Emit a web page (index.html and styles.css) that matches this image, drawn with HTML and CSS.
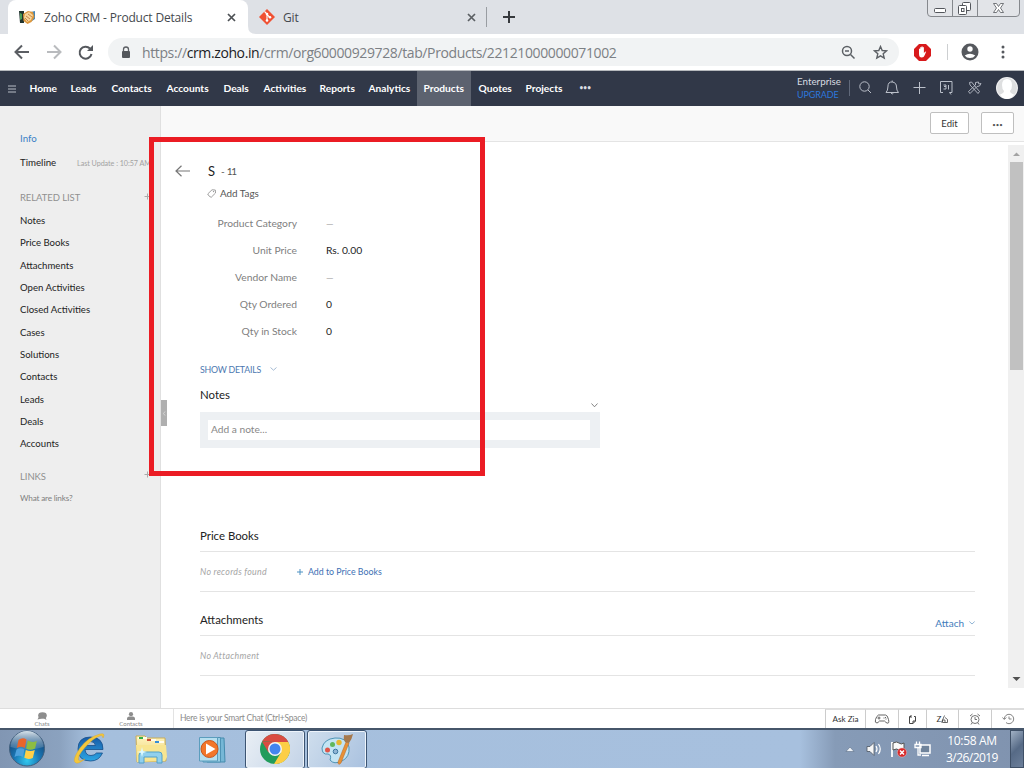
FILE: index.html
```html
<!DOCTYPE html>
<html lang="en">
<head>
<meta charset="utf-8">
<title>Zoho CRM - Product Details</title>
<link rel="stylesheet" href="styles.css">
</head>
<body>
<div class="screen">
  <header class="tabstrip">
    <div class="tab tab-active">
      <svg class="favicon" width="17" height="16" viewBox="0 0 17 16"><path d="M0 2h5v12H1z" fill="#20352f"/><path d="M1 4l2 1v5l-2 1z" fill="#4b9f59"/><path d="M12 3l4-1v8l-3 2z" fill="#4386b8"/><path d="M4 5l5-3 5 1 1.500 5-3 5-4 2-4-3z" fill="#dc963c"/><path d="M6 5l4-2 4 3-2 5-4 2-3-4z" fill="#f7d69c"/><path d="M7 7l4 3M9 5l4 3M6 9l3 3" stroke="#b5713a" stroke-width=".8" fill="none"/></svg>
      <span class="tab-title">Zoho CRM - Product Details</span>
      <svg class="tab-x" width="9" height="9" viewBox="0 0 9 9"><path d="M1 1l7 7M8 1l-7 7" stroke="#4c5054" stroke-width="1.700"/></svg>
      <svg class="flare" width="8" height="8" viewBox="0 0 8 8"><path d="M0 0q0 8 8 8H0z" fill="#fff"/></svg>
    </div>
    <div class="tab">
      <svg class="favicon" width="17" height="16" viewBox="0 0 17 16"><path d="M8 0L16 8l-8 8-8-8z" fill="#f05133"/><path d="M5.500 2.500L8 5v7M8 5.500l3 3" stroke="#fff" stroke-width="1.100" fill="none"/><circle cx="8" cy="5" r="1.300" fill="#fff"/><circle cx="8" cy="11.500" r="1.300" fill="#fff"/><circle cx="11" cy="8.300" r="1.300" fill="#fff"/></svg>
      <span class="tab-title git">Git</span>
      <svg class="tab-x" width="9" height="9" viewBox="0 0 9 9"><path d="M1 1l7 7M8 1l-7 7" stroke="#5b5f63" stroke-width="1.700"/></svg>
    </div>
    <i class="tab-sep"></i>
    <svg class="new-tab" width="12" height="12" viewBox="0 0 12 12"><path d="M6 0v12M0 6h12" stroke="#36393d" stroke-width="2"/></svg>
    <svg class="win-buttons" width="94" height="18" viewBox="0 0 94 18"><path d="M.5 0v13q0 3.500 3.500 3.500h85q3.500 0 3.500-3.500V0" fill="#e2e4e8" stroke="#85888d"/><path d="M25.500 0v16M50.500 0v16" stroke="#85888d"/><g fill="#fff" stroke="#53565c"><rect x="7.500" y="8.500" width="11" height="4" rx="1"/><rect x="35.500" y="2.500" width="8" height="8" rx="1"/><rect x="31.500" y="5.500" width="8" height="9" rx="1"/><rect x="34.500" y="8.500" width="2.500" height="3"/><path d="M66.500 3.500h3l2 3 2-3h3l-3 4.500 3 4.500h-3l-2-3-2 3h-3l3-4.500z" stroke-width=".8"/></g></svg>
  </header>

  <div class="toolbar">
    <svg class="nav-btns" width="80" height="18" viewBox="0 0 80 18"><g fill="none" stroke-width="2"><path d="M15 9H2M8 2.500L1.500 9 8 15.500" stroke="#5b5e63"/><path d="M33 9h13M40 2.500L46.500 9 40 15.500" stroke="#b9bbbe"/><path d="M76 5.500A6 6 0 1 0 77.500 11" stroke="#55585d"/></g><path d="M79 2v6h-6z" fill="#55585d"/></svg>
    <div class="omnibox">
      <svg width="10" height="13" viewBox="0 0 10 13"><path d="M2.500 6V3.500a2.500 2.500 0 0 1 5 0V6" fill="none" stroke="#5c5f64" stroke-width="1.300"/><rect x="1" y="5" width="8" height="7" rx="1" fill="#54575c"/></svg>
      <span class="url">https://<b>crm.zoho.in</b>/crm/org60000929728/tab/Products/22121000000071002</span>
      <svg width="15" height="15" viewBox="0 0 15 15"><g fill="none" stroke="#5c6065" stroke-width="1.500"><circle cx="6" cy="6" r="4.500"/><path d="M9.500 9.500l4 4M4 6h4"/></g></svg>
      <svg width="15" height="15" viewBox="0 0 15 15"><path d="M7.500 1.500l1.700 4 4.300.4-3.300 2.900 1 4.300-3.700-2.300-3.700 2.300 1-4.300L1.500 5.900l4.300-.4z" fill="none" stroke="#5c6065" stroke-width="1.400"/></svg>
    </div>
    <svg class="ext" width="17" height="17" viewBox="0 0 17 17"><path d="M5 0h7l5 5v7l-5 5H5l-5-5V5z" fill="#d81a1c"/><path d="M5 8V5q.7-1 1.200 0v2.500V3.500q.6-1 1.200 0V7 2.700q.7-1 1.300 0V7 3.400q.6-.8 1.200 0V9q1.200-2 2.300-1.500L10.800 11q-1 2.500-3 2.500Q5 13.500 5 10z" fill="#fff"/></svg>
    <i class="tool-sep"></i>
    <svg class="profile" width="18" height="18" viewBox="0 0 18 18"><circle cx="9" cy="9" r="8.500" fill="#56595e"/><circle cx="9" cy="6" r="2.700" fill="#fff"/><path d="M3.700 12.500q5.300-3.700 10.600 0Q12.500 15 9 15t-5.300-2.500" fill="#fff"/></svg>
    <svg class="kebab" width="4" height="14" viewBox="0 0 4 14"><g fill="#56595e"><circle cx="2" cy="2" r="1.500"/><circle cx="2" cy="7" r="1.500"/><circle cx="2" cy="12" r="1.500"/></g></svg>
  </div>

  <nav class="crmnav">
    <svg class="burger" width="8" height="8" viewBox="0 0 8 8"><path d="M0 1h8M0 4h8M0 7h8" stroke="#b9bdc6"/></svg>
    <div class="modules">
      <a>Home</a><a>Leads</a><a>Contacts</a><a>Accounts</a><a>Deals</a><a>Activities</a><a>Reports</a><a>Analytics</a><a class="current">Products</a><a class="quotes">Quotes</a><a>Projects</a><a class="more">•••</a>
    </div>
    <div class="plan"><span>Enterprise</span><span class="upgrade">UPGRADE</span></div>
    <svg class="nav-icons" width="136" height="20" viewBox="0 0 136 20"><g fill="none" stroke="#bbc0ca"><path d="M.5 2v16" stroke="#61697a"/><circle cx="15.500" cy="8.500" r="4.700"/><path d="M19 12l3 3M37 14.500h12.500q-2-2-2-5.500 0-4.500-4.300-5t-4.300 5q0 3.500-1.900 5.500M42 15q1.200 2 2.500 0M43.200 4V2.500M70.500 4v12M64.500 9.500h12"/><path d="M94 14.500h-2.500v-11H103v11h-2.500l1.500 2M94.500 7h2.500v1.500h-2M97 8.500V11h-2.500M99.500 7v4.500"/><path d="M120.500 4.500l2-.5 8 9.500-1.500 2-8-8.500zM129.500 4l-3 .5v2.500l-7 6.500 1.500 2 7-7 2.500-.5 1.500-2.500-2.200.5z" stroke-width=".9"/></g></svg>
    <svg class="avatar" width="22" height="22" viewBox="0 0 22 22"><circle cx="11" cy="11" r="11" fill="#f1f1f2"/><circle cx="11" cy="11" r="10" fill="#dedfe0"/><path d="M11 2q5 0 5 6 0 4-2 6 0 2 4 3.500Q15 22 11 22t-7-4.500Q8 16 8 14 6 12 6 8q0-6 5-6" fill="#fff"/></svg>
  </nav>

  <div class="page">
    <aside class="sidebar">
      <a class="info">Info</a>
      <div class="timeline"><a>Timeline</a><small>Last Update : 10:57 AM</small></div>
      <div class="side-head"><span>RELATED LIST</span><svg width="7" height="7"><path d="M3.500 .5v6M.5 3.500h6" stroke="#aaa"/></svg></div>
      <ul>
        <li>Notes</li><li>Price Books</li><li>Attachments</li><li>Open Activities</li><li>Closed Activities</li><li>Cases</li><li>Solutions</li><li>Contacts</li><li>Leads</li><li>Deals</li><li>Accounts</li>
      </ul>
      <div class="side-head links"><span>LINKS</span><svg width="7" height="7"><path d="M3.500 .5v6M.5 3.500h6" stroke="#aaa"/></svg></div>
      <a class="what">What are links?</a>
      <svg class="handle" width="6" height="26" viewBox="0 0 6 26"><path d="M0 0h6v26H0z" fill="#afafaf"/><path d="M4 11.500L2.500 13.500 4 15.500" stroke="#dcdcdc" stroke-width=".8" fill="none"/></svg>
    </aside>

    <main class="main">
      <div class="actions"><button class="edit">Edit</button><button class="dots">•••</button></div>
      <div class="content">
        <div class="record">
          <div class="title-row">
            <svg width="16" height="12" viewBox="0 0 16 12"><path d="M15 6H1M6.500 .8L1 6l5.500 5.200" fill="none" stroke="#777" stroke-width="1.200"/></svg>
            <h1>S</h1><span class="num">- 11</span>
          </div>
          <div class="tags"><svg width="9" height="9" viewBox="0 0 9 9"><path d="M.7 5L5 .8 8.300 1l.2 3L4.200 8.300Q2 7.800 .7 5z" fill="none" stroke="#888" stroke-width=".8"/><circle cx="6.500" cy="2.600" r=".6" fill="#888"/></svg><span>Add Tags</span></div>
          <dl>
            <dt>Product Category</dt><dd class="nil">—</dd>
            <dt>Unit Price</dt><dd>Rs. 0.00</dd>
            <dt>Vendor Name</dt><dd class="nil">—</dd>
            <dt>Qty Ordered</dt><dd>0</dd>
            <dt>Qty in Stock</dt><dd>0</dd>
          </dl>
          <div class="show">SHOW DETAILS<svg width="7" height="4" viewBox="0 0 7 4"><path d="M.5 .5l3 2.700 3-2.700" fill="none" stroke="#8ea8c8" stroke-width=".8"/></svg></div>
          <h2 class="notes-title">Notes</h2>
          <svg class="sort" width="7" height="5" viewBox="0 0 7 5"><path d="M.5 .5l3 3.300 3-3.300" fill="none" stroke="#666" stroke-width=".8"/></svg>
          <div class="note"><div class="note-input">Add a note...</div></div>
          <section class="related">
            <div class="rel-head"><h2>Price Books</h2></div>
            <div class="rel-body"><em class="norec">No records found</em><a class="add"><svg width="6" height="6"><path d="M3 0v6M0 3h6" stroke="#4d91c2"/></svg>Add to Price Books</a></div>
          </section>
          <section class="related attachments">
            <div class="rel-head"><h2>Attachments</h2><a class="attach">Attach<svg width="6" height="4" viewBox="0 0 6 4"><path d="M.3 .5L3 3 5.700 .5" fill="none" stroke="#75a1c9" stroke-width=".8"/></svg></a></div>
            <div class="rel-body"><em class="noatt">No Attachment</em></div>
          </section>
        </div>
        <div class="scrollbar"><svg width="16" height="16"><path d="M5 11h7L8.500 7.500z" fill="#a3a3a3"/></svg><i></i><svg width="16" height="16"><path d="M4.500 5h8l-4 4z" fill="#505050"/></svg></div>
      </div>
    </main>
    <div class="highlight"></div>
  </div>

  <div class="chatbar">
    <div class="cb-tab"><svg width="12" height="8" viewBox="0 0 12 8"><ellipse cx="6.500" cy="3.500" rx="4.300" ry="3.300" fill="#8d8d8d"/><path d="M1.500 7.500l1.500-3 3 2M10.500 8L9.500 5 7 6z" fill="#8d8d8d"/></svg><span>Chats</span></div>
    <div class="cb-tab"><svg width="8" height="8" viewBox="0 0 8 8"><circle cx="4" cy="2.200" r="2.100" fill="#8d8d8d"/><path d="M0 8V6.300Q0 5 2 4.500h4q2 .5 2 1.800V8z" fill="#8d8d8d"/></svg><span>Contacts</span></div>
    <div class="smart">Here is your Smart Chat (Ctrl+Space)</div>
    <div class="cb-tools">
      <span class="zia">Ask Zia</span>
      <span><svg width="16" height="12" viewBox="0 0 16 12"><g fill="none" stroke="#555" stroke-width=".9"><path d="M4.500 2h7q2 0 3 4.500T13 10q-1-.3-2.500-2h-5Q4 9.700 3 10q-2.500 0-1.500-3.500T4.500 2zM5 3.500v3M3.500 5h3M9.500 5h1M11.500 4v1M11.500 6h1"/></g></svg></span>
      <span><svg width="9" height="11" viewBox="0 0 9 11"><path d="M3 2.500H1.500v7H5L7.500 7V2.500H6M7.500 7H5v2.500M3 1v3" fill="none" stroke="#444"/></svg></span>
      <span class="za">Z<svg width="7" height="8" viewBox="0 0 7 8"><path d="M.5 7.500L3.500 .5M1.500 5h2.500v2.500H1.500zM4 2.500l2.500 2v3H4" fill="none" stroke="#444" stroke-width=".8"/></svg></span>
      <span><svg width="12" height="12" viewBox="0 0 12 12"><g fill="none" stroke="#666" stroke-width=".9"><circle cx="6" cy="6.500" r="4"/><path d="M6 4v2.500h2M1 3l2.500-2M11 3L8.500 1M3 10l-1 1.500M9 10l1 1.500"/></g></svg></span>
      <span><svg width="13" height="12" viewBox="0 0 13 12"><path d="M2.300 6a4.700 4.700 0 1 1 1.700 3.600M.5 4.500l1.800 2 2-2M7 3.500V6h2.500" fill="none" stroke="#777" stroke-width=".9"/></svg></span>
    </div>
  </div>

  <footer class="taskbar">
    <svg class="launch" width="232" height="38" viewBox="0 0 232 38">
      <defs>
        <radialGradient id="orb" cx=".5" cy=".85" r=".8"><stop offset="0" stop-color="#32c8ee"/><stop offset=".45" stop-color="#1977b5"/><stop offset="1" stop-color="#143c6c"/></radialGradient>
        <linearGradient id="gloss" x2="0" y2="1"><stop stop-color="#d8e4ec"/><stop offset="1" stop-color="#7d9db8" stop-opacity=".3"/></linearGradient>
        <linearGradient id="ie" x2="0" y2="1"><stop stop-color="#175ba8"/><stop offset="1" stop-color="#2ba5e4"/></linearGradient>
        <linearGradient id="fold" x2="0" y2="1"><stop stop-color="#fff4bd"/><stop offset="1" stop-color="#ebcf70"/></linearGradient>
      </defs>
      <circle cx="27" cy="18.500" r="17.500" fill="url(#orb)" stroke="#425f7d"/><path d="M10.500 17A16.500 16 0 0 1 43.500 17Q27 22 10.500 17z" fill="url(#gloss)"/>
      <path d="M18.500 10q4-3 8-.5l-1.700 8.500q-4-2.500-8 0z" fill="#e9652b"/><path d="M27.800 10.500q4 2.500 9 .5l-1.700 7.500q-5 2.500-9 0z" fill="#8cbd43"/><path d="M16.500 19.500q4-2.500 8 0l-1.700 7.500q-4-2.500-8.300 0z" fill="#4da1dd"/><path d="M25.800 20q4.500 2.200 9 0l-2 8q-4.500 2-8.500-.2z" fill="#ffd048"/>
      <path d="M103 19.500H85q.5 6 6 6 3.500 0 5.500-2.500h6Q99 31 90.500 31 78 31 78 19T90.500 7Q103 7 103 19.500zM85.500 15.500h10q-.6-4-5-4t-5 4z" fill="url(#ie)" stroke="#174f8a" stroke-width=".8"/>
      <path d="M103 8q3-5.500-3-4-12 3-20 14-9 13-4 15 3 1 9-4-5.500 3-6.500 1-1-4 6-12Q93 8 101 5.500q2 0 2 2.500z" fill="#f4c73c" stroke="#d6a52a" stroke-width=".4"/>
      <path d="M136 6h9l2 2h18l1 23-29 1z" fill="url(#fold)" stroke="#c9ad58"/><path d="M138 7h9v2h-9zM147 9h9v2h-9zM156 11h8v2h-8z" fill="#fffdf0"/><path d="M139 7h4v2h-4z" fill="#35ad46"/><path d="M147 9h4v2h-4z" fill="#cc4d35"/><path d="M155 11h4v2h-4z" fill="#368dd6"/><path d="M136 15h30l1 12-2 4-28 1z" fill="#f8e591"/><path d="M139 33V25q0-3 4-3h16q3 0 3 3v8h-5v-6h-13v6z" fill="#91d0ed" stroke="#50a1cb"/><path d="M142 17l1 4 4 1-4 1-1 4-1-4-4-1 4-1z" fill="#dffaff"/>
      <path d="M207 8h17l1 24h-18z" fill="#76b7d6" stroke="#458bad"/><path d="M203 7.500h17.500v24.500H203z" fill="#98cee5" stroke="#4e93b5"/><path d="M199.500 7.500h18v23.500h-18z" fill="#b6dfef" stroke="#5b9dbd"/><circle cx="209.500" cy="19" r="8.500" fill="#f2762a" stroke="#c9571d"/><path d="M206 13.500l9.500 5.500-9.500 5.500z" fill="#fff"/>
    </svg>
    <div class="task task-chrome"><svg width="30" height="30" viewBox="0 0 30 30"><circle cx="15" cy="15" r="15" fill="#219c5b"/><path d="M15 8L2.200 7.200A15 15 0 0 1 28.300 8z" fill="#d94c42"/><path d="M2 7.500L8.500 18.500 15 8z" fill="#d94c42"/><path d="M15 8h13.300A15 15 0 0 1 14 30l7-11.500z" fill="#fcce45"/><circle cx="15" cy="15" r="7" fill="#f4f4f4"/><circle cx="15" cy="15" r="5.500" fill="#4385ef"/></svg></div>
    <div class="task task-paint"><svg width="34" height="34" viewBox="0 0 34 34"><path d="M2 16Q4 7 15 6t14 9q1 10-7 14-8 4-12-1 2-5-2-6-6 1-6-6z" fill="#c3e4f3" stroke="#4e94b5"/><circle cx="7.500" cy="18" r="2.500" fill="#df5447"/><circle cx="12.500" cy="12.500" r="2.500" fill="#60b75b"/><circle cx="19" cy="10.500" r="2.700" fill="#e8b72f"/><circle cx="15.500" cy="19.500" r="2.300" fill="#8fb5d4" stroke="#3c769f"/><path d="M26 10l3 1-8 20q-3 3-3-1z" fill="#e79136" stroke="#b76523" stroke-width=".5"/><path d="M24 3q5 1 9-1-1 5-4 9l-4-1q-2-3-1-7z" fill="#a6794d"/></svg></div>
    <svg class="tray" width="88" height="20" viewBox="0 0 88 20"><path d="M1 12.500L5 8l4 4.500z" fill="#eef2f7" stroke="#4d6079" stroke-width=".5"/><path d="M22 7.500h3L29 3.500v13l-4-4h-3z" fill="#f6f6f6" stroke="#4b5562" stroke-width=".8"/><path d="M31 7q2 3 0 6M33.500 5q3.500 5 0 10" stroke="#fff" fill="none" stroke-width="1.200"/><path d="M47 3v15" stroke="#fff" stroke-width="1.800"/><path d="M48 4q4-2 6 0t5 0v7q-3 2-5 0t-6 0z" fill="#fafafa" stroke="#555"/><circle cx="57" cy="13.500" r="4.600" fill="#d72828" stroke="#f2baba" stroke-width=".5"/><path d="M55 11.500l4 4M59 11.500l-4 4" stroke="#fff" stroke-width="1.500"/><rect x="75" y="6" width="10" height="8" fill="#6f839b" stroke="#fff" stroke-width="1.500"/><path d="M77 16.500h7" stroke="#fff" stroke-width="1.500"/><path d="M71.500 2.500v3M74.500 2.500v3M70 5.500h6v3h-6zM73 9v7h3" fill="none" stroke="#fff" stroke-width="1.300"/></svg>
    <div class="clock"><span class="time">10:58 AM</span><span class="date">3/26/2019</span></div>
    <i class="peek"></i>
  </footer>
</div>
</body>
</html>
```
FILE: styles.css
```css
* { box-sizing: border-box; margin: 0; padding: 0; }
body { font-family: Lato, sans-serif; }
svg { display: block; flex: none; }
.screen { width: 1024px; height: 768px; display: flex; flex-direction: column; overflow: hidden; background: #fff; white-space: nowrap; }

/* browser tabs */
.tabstrip { position: relative; height: 34px; flex: none; background: #dee1e6; display: flex; align-items: center; padding-left: 8px; font-family: "Open Sans", sans-serif; font-size: 12px; color: #45494e; }
.tab { position: relative; width: 240px; height: 34px; display: flex; align-items: center; padding: 0 12px 0 11px; }
.tab-active { background: #fff; border-radius: 8px 8px 0 0; }
.tab-title { margin-left: 8px; flex: 1; letter-spacing: -.18px; }
.tab-title.git { margin-left: 7px; }
.flare { position: absolute; left: 240px; bottom: 0; }
.tab-sep { width: 1px; height: 20px; background: #999da2; margin-left: -2px; }
.new-tab { margin-left: 16px; }
.win-buttons { position: absolute; left: 927px; top: 0; }

/* browser toolbar */
.toolbar { height: 37px; flex: none; display: flex; align-items: center; border-bottom: 1px solid #b6b9bd; padding-left: 14px; }
.omnibox { width: 791px; height: 28px; margin-left: 14px; border-radius: 14px; background: #f1f3f4; display: flex; align-items: center; padding: 0 11px 0 13px; gap: 17px; }
.url { font-family: "Open Sans", sans-serif; font-size: 14px; color: #7c8084; margin-left: -6px; flex: 1; letter-spacing: -.385px; }
.url b { font-weight: 400; color: #202124; }
.ext { margin-left: 15px; }
.tool-sep { width: 1px; height: 16px; background: #cdcfd1; margin-left: 16px; }
.profile { margin-left: 13px; }
.kebab { margin-left: 22px; }

/* CRM navigation */
.crmnav { height: 35px; flex: none; display: flex; align-items: center; background: #313848; padding-left: 8px; color: #fff; }
.modules { align-self: stretch; display: grid; grid-template-columns: 41px 41px 55px 57px 40px 56px 49px 55px 54px 48px 54px 30px; margin-left: 7px; font-size: 10.200px; font-weight: 700; }
.modules a { padding-left: 6.500px; line-height: 35px; }
.modules .quotes { padding-left: 7.500px; }
.modules .current { background: #5c626f; }
.modules .more { font-size: 6.500px; line-height: 34px; letter-spacing: .1px; color: #dcdfe4; }
.plan { display: flex; flex-direction: column; width: 52px; margin: -2px 0 0 194px; font-size: 9.800px; line-height: 14px; color: #d8dbe1; }
.plan .upgrade { color: #2c77dd; font-size: 9px; letter-spacing: -.1px; }
.nav-icons { margin-top: -2px; }
.avatar { margin-left: 11px; margin-top: -1px; }

/* page frame */
.page { position: relative; height: 602px; flex: none; display: flex; }
.sidebar { position: relative; width: 161px; background: #eee; border-right: 1px solid #e0e0e0; padding: 24px 0 0 20px; font-size: 9.700px; line-height: 16px; color: #222; }
.info { display: block; color: #3b7fc6; }
.timeline { display: flex; height: 16px; margin-top: 8px; }
.timeline a { width: 57px; font-size: 9.700px; }
.timeline small { font-size: 7.200px; line-height: 20px; letter-spacing: -.05px; color: #a2a2a2; }
.side-head { display: flex; justify-content: space-between; margin-top: 20px; padding-right: 9px; color: #909090; font-size: 9.500px; letter-spacing: -.08px; }
.side-head svg { margin-top: 3px; }
.side-head.links { margin-top: 14px; }
.side-head.links svg { margin-top: 2px; }
.sidebar ul { list-style: none; margin-top: 4.200px; }
.sidebar li { height: 22.300px; line-height: 22.300px; font-size: 9.600px; }
.what { display: block; margin-top: 4.300px; font-size: 8.200px; letter-spacing: -.18px; color: #808080; }
.handle { position: absolute; left: 161px; top: 294px; }

.main { flex: 1; display: flex; flex-direction: column; }
.actions { height: 36px; background: #f9f9f9; border-bottom: 1px solid #e4e4e4; display: flex; justify-content: flex-end; gap: 12px; padding: 6px 10px 0 0; }
.actions button { height: 22px; border: 1px solid #bfbfbf; border-radius: 2px; background: #fff; font: 9.500px Lato, sans-serif; color: #333; }
.actions .edit { width: 39px; }
.actions .dots { width: 33px; padding-top: 2px; font-size: 6px; color: #555; }
.content { flex: 1; display: flex; justify-content: space-between; }
.record { position: relative; width: 814px; padding: 19px 0 0 39px; }
.title-row { display: flex; align-items: center; height: 20px; margin-left: -25px; }
.title-row h1 { font-size: 13px; font-weight: 400; margin-left: 17px; color: #222; }
.num { font-size: 10px; margin-left: 6px; letter-spacing: -1.100px; word-spacing: 1.500px; color: #555; }
.tags { display: flex; align-items: center; gap: 4px; height: 24px; margin-left: 7px; font-size: 9.900px; color: #555; }
dl { display: grid; grid-template-columns: 97px 1fr; column-gap: 29px; grid-auto-rows: 27px; line-height: 27px; margin-top: 5px; font-size: 10.300px; }
dt { text-align: right; color: #808080; }
dd { color: #222; }
dd.nil { color: #aaa; font-size: 9.500px; }
.show { display: flex; align-items: center; gap: 9px; height: 16px; margin-top: 16px; font-size: 8.800px; letter-spacing: -.23px; color: #4c78b0; }
h2 { font-size: 11.400px; font-weight: 400; line-height: 16px; color: #222; }
.notes-title { margin-top: 10px; }
.sort { position: absolute; left: 430px; top: 261px; }
.note { width: 400px; height: 36px; margin-top: 9px; padding: 8px 10px 8px 8px; background: #edf0f3; }
.note-input { height: 20px; line-height: 19px; padding-left: 3px; background: #fff; color: #888; font-size: 10.200px; }
.related { margin-top: 76px; }
.related.attachments { margin-top: 16px; }
.rel-head { display: flex; justify-content: space-between; height: 28px; border-bottom: 1px solid #e4e4e4; padding-top: 4px; }
.rel-body { display: flex; align-items: center; height: 40px; border-bottom: 1px solid #e4e4e4; font-size: 8.800px; }
.rel-body em { color: #a5a5a5; width: 97px; letter-spacing: .27px; }
.add { display: flex; align-items: center; gap: 5px; color: #3d6fb4; }
.attach { display: flex; align-items: center; gap: 5px; height: 22px; font-size: 10px; color: #3f7cbb; }
.scrollbar { width: 16px; height: 543px; margin-top: 3px; background: #f0f0f0; display: flex; flex-direction: column; }
.scrollbar i { width: 13px; height: 208px; margin: 1px 0 302px 2px; background: #c1c1c1; }
.highlight { position: absolute; left: 149px; top: 31px; width: 336px; height: 339px; border: 5px solid #eb1c24; }

/* chat strip */
.chatbar { height: 20px; flex: none; display: flex; border-top: 1px solid #ddd; background: #fff; }
.cb-tab { display: flex; flex-direction: column; align-items: center; width: 84px; padding-top: 3px; font-size: 6px; line-height: 7px; color: #888; }
.cb-tab + .cb-tab { width: 94px; margin-right: -5px; }
.smart { flex: 1; border-left: 1px solid #e3e3e3; padding-left: 6px; line-height: 18px; font-size: 8.500px; letter-spacing: -.24px; color: #8b8b8b; }
.cb-tools { display: grid; grid-template-columns: 40px 33px 28px 32px 33px 33px; }
.cb-tools span { display: flex; align-items: center; justify-content: center; border-left: 1px solid #ccc; border-top: 1px solid #ddd; font-size: 8.100px; color: #333; }

/* Windows taskbar */
.taskbar { height: 40px; flex: none; display: flex; align-items: center; border-top: 2px solid #46566a; background: linear-gradient(90deg, #8196b3 0, #8ba2bf 60px, #a5bfdd 90px, #a7c0de 800px, #869bb7 835px, #8093af 100%); }
.task { flex: none; width: 60px; height: 39px; display: flex; align-items: center; justify-content: center; border: 1px solid #3c5472; border-radius: 3px; box-shadow: inset 0 0 0 1px #eef4fb; }
.task-chrome { margin-left: 13px; background: linear-gradient(120deg, #e9eff5, #c3d3e7); }
.task-paint { margin-left: 2px; background: linear-gradient(120deg, #cfdeed, #a9c1df); }
.tray { margin-left: 478px; }
.clock { flex: none; display: flex; flex-direction: column; align-items: center; width: 72px; margin-left: 3px; font-family: "Open Sans", sans-serif; font-size: 12px; line-height: 17px; color: #fff; letter-spacing: -.55px; }
.clock .time { letter-spacing: -.35px; }
.peek { flex: none; width: 14px; height: 38px; margin-left: auto; border: 1px solid #3f5067; background: linear-gradient(135deg, #a1b1c5, #566a86 50%, #6c7f9a); }
```
